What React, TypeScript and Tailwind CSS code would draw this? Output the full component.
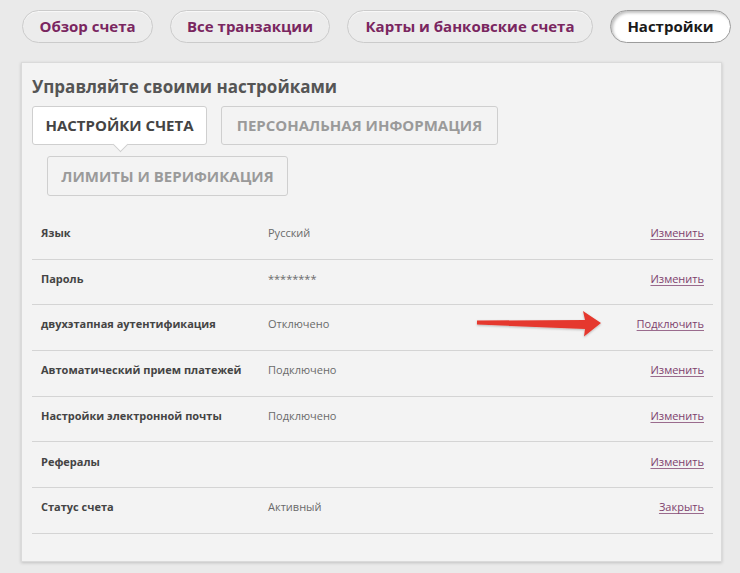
import React from "react";

const font = { fontFamily: '"Open Sans", "Noto Sans", sans-serif' };

const navItems = [
  { label: "Обзор счета", w: "w-[131px]" },
  { label: "Все транзакции", w: "w-[160px]" },
  { label: "Карты и банковские счета", w: "w-[246px]" },
];

const rows = [
  { label: "Язык", value: "Русский", action: "Изменить" },
  { label: "Пароль", value: "********", action: "Изменить" },
  { label: "двухэтапная аутентификация", value: "Отключено", action: "Подключить", arrow: true },
  { label: "Автоматический прием платежей", value: "Подключено", action: "Изменить" },
  { label: "Настройки электронной почты", value: "Подключено", action: "Изменить" },
  { label: "Рефералы", value: "", action: "Изменить" },
  { label: "Статус счета", value: "Активный", action: "Закрыть" },
];

function Arrow() {
  return (
    <svg
      className="pointer-events-none absolute left-[439px] top-[-1px]"
      width="140"
      height="45"
      viewBox="0 0 140 45"
    >
      <defs>
        <filter id="arrowShadow" x="-10%" y="-30%" width="120%" height="160%">
          <feDropShadow dx="0" dy="1" stdDeviation="1" floodColor="#000" floodOpacity="0.25" />
        </filter>
      </defs>
      <path
        d="M6 16.5 L114 16 L112 7 L130 19 L113 32.5 L114 25 L6 20.5 Z"
        fill="#e5392e"
        filter="url(#arrowShadow)"
        strokeLinejoin="round"
      />
    </svg>
  );
}

export default function App() {
  return (
    <div className="min-h-[573px] w-[740px] bg-[#eaeaea] pb-[11px]" style={font}>
      <nav className="flex gap-[17px] pl-[22px] pt-[10px]">
        {navItems.map((item) => (
          <div
            key={item.label}
            className={`${item.w} flex h-[33px] items-center justify-center rounded-full border border-[#cbcbcb] bg-[#ececec] text-[15px] font-bold text-[#7a2660] shadow-[inset_0_1px_1px_rgba(255,255,255,0.7)]`}
          >
            {item.label}
          </div>
        ))}
        <div className="flex h-[33px] w-[121px] items-center justify-center rounded-full border border-[#9c9c9c] bg-white text-[15px] font-bold text-[#1a1a1a] shadow-[inset_2px_2px_3px_rgba(0,0,0,0.25)]">
          Настройки
        </div>
      </nav>

      <section className="ml-[21px] mt-[19px] h-[500px] w-[701px] border border-[#dadada] bg-[#f3f3f3] px-[10px] pt-[12px] shadow-[0_1px_3px_rgba(0,0,0,0.18)]">
        <h1 className="text-[17px] font-bold leading-6 text-[#555]">Управляйте своими настройками</h1>

        <div className="mt-[7px] flex flex-wrap gap-y-[11px]">
          <div className="relative flex h-[39px] w-[175px] items-center justify-center rounded-[3px] border border-[#cfcfcf] bg-white text-[15px] font-bold uppercase text-[#444]">
            Настройки счета
            <span className="absolute bottom-[-6px] left-[82px] h-[11px] w-[11px] rotate-45 border-b border-r border-[#cfcfcf] bg-white" />
          </div>
          <div className="ml-[14px] flex h-[39px] w-[277px] items-center justify-center rounded-[3px] border border-[#cfcfcf] bg-[#f3f3f3] text-[15px] font-bold uppercase text-[#9a9a9a]">
            Персональная информация
          </div>
          <div className="ml-[15px] flex h-[40px] w-[241px] items-center justify-center rounded-[3px] border border-[#cfcfcf] bg-[#f3f3f3] text-[15px] font-bold uppercase text-[#9a9a9a]">
            Лимиты и верификация
          </div>
        </div>

        <div className="mt-[18px] w-[681px]">
          {rows.map((row) => (
            <div
              key={row.label}
              className="relative flex h-[45.7px] items-center border-b border-[#d4d4d4] px-[9px] pb-[6px] text-[11px]"
            >
              <div className="w-[227px] font-bold text-[#444]">{row.label}</div>
              <div className="flex-1 text-[#6a6a6a]">{row.value}</div>
              <a className="text-[#7d3f6d] underline decoration-[#9a6b8d] underline-offset-2">{row.action}</a>
              {row.arrow && <Arrow />}
            </div>
          ))}
        </div>
      </section>
    </div>
  );
}
